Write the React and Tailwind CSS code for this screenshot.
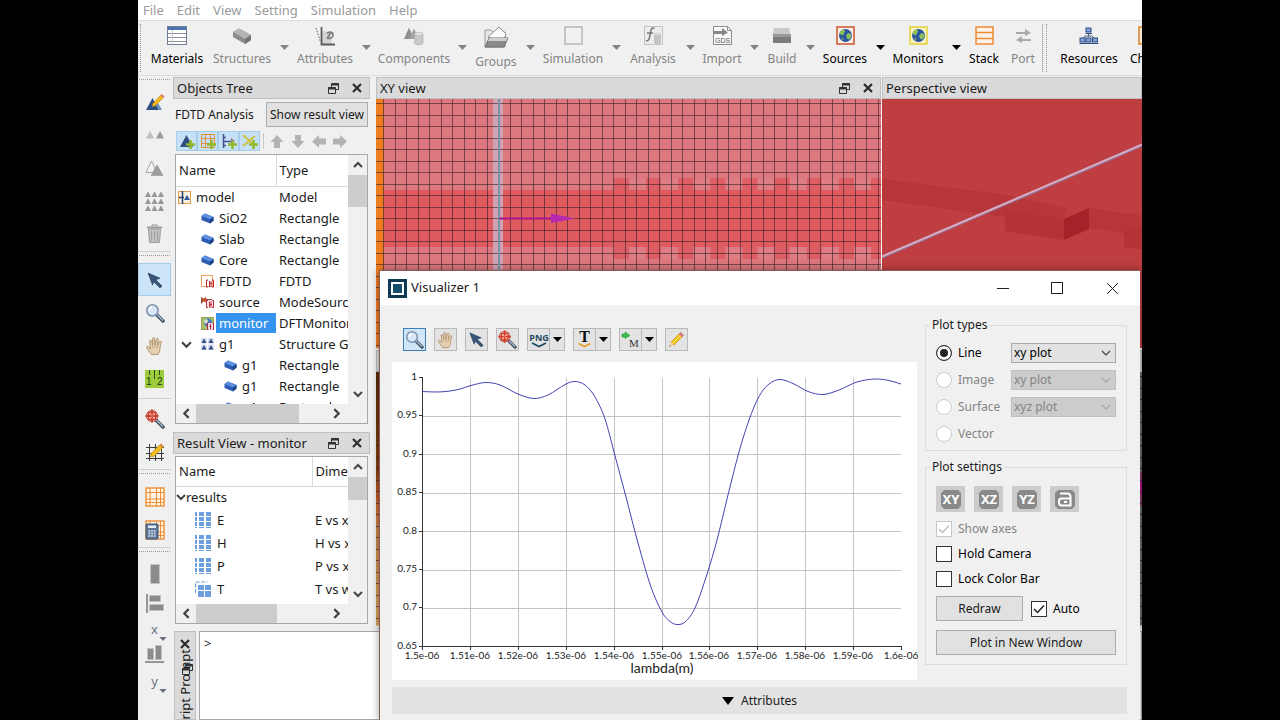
/**
 * Photonic simulation workspace — objects tree, layout views, script prompt
 * and the floating Visualizer window with a transmission plot.
 */
import { useState } from 'react'

const MENUS = ['File', 'Edit', 'View', 'Setting', 'Simulation', 'Help']

/* ---------- small shared glyphs ---------- */

function Caret({ className = '' }) {
  return (
    <svg className={className} width="9" height="5" viewBox="0 0 9 5">
      <path d="M0 0h9L4.5 5z" fill="currentColor" />
    </svg>
  )
}

function FloatIcon() {
  return (
    <svg width="11" height="11" viewBox="0 0 11 11" fill="none" stroke="#333">
      <path d="M3.5 4V.5h7v6H8" />
      <path d="M3 1.5h8" strokeWidth="2" />
      <path d="M.5 4.5h7v6h-7z" fill="#ddd" />
      <path d="M0 5.5h8" strokeWidth="2" />
    </svg>
  )
}

function CloseIcon() {
  return (
    <svg width="10" height="10" viewBox="0 0 10 10" stroke="#2b2b2b" strokeWidth="2.2">
      <path d="M1 1l8 8M9 1L1 9" />
    </svg>
  )
}

function Chevron({ d, size = 10, color = '#444', width = 2 }) {
  return (
    <svg width={size} height={size} viewBox="0 0 10 10" fill="none" stroke={color} strokeWidth={width}>
      <path d={d} />
    </svg>
  )
}

const UP = 'M1 7l4-4 4 4'
const DOWN = 'M1 3l4 4 4-4'
const LEFT = 'M7 1L3 5l4 4'
const RIGHT = 'M3 1l4 4-4 4'

/* ---------- pictures ---------- */

function Magnifier({ size = 20, target = false }) {
  return (
    <svg width={size} height={size} viewBox="0 0 20 20">
      <path d="M11 11l7 7" stroke="#3d4a5c" strokeWidth="3.4" strokeLinecap="round" />
      <path d="M12 11.6l5.6 5.6" stroke="#aab8cc" strokeWidth="1.4" strokeLinecap="round" />
      {target ? (
        <>
          <circle cx="7" cy="7" r="5.6" fill="#f3d9d3" stroke="#b9564a" />
          <path d="M7 .5v13M.5 7h13" stroke="#cf3a26" strokeWidth="1.8" />
          <path d="M3.5 3.5h7v7h-7z" fill="none" stroke="#cf3a26" strokeWidth="1.4" />
          <path d="M5 5h4v4H5z" fill="#e2553f" />
          <path d="M5.500 5.500h.8v.8h-.8zM8 5.500h.8v.8H8zM5.500 8h.8v.8h-.8zM8 8h.8v.8H8z" fill="#fff" />
        </>
      ) : (
        <>
          <circle cx="7.4" cy="7.4" r="5.6" fill="#d8e7f8" stroke="#7f93b0" strokeWidth="1.6" />
          <path d="M4.2 7.2a3.4 3.4 0 013-3.2" stroke="#fff" strokeWidth="1.6" fill="none" />
        </>
      )}
    </svg>
  )
}

function Hand({ size = 20 }) {
  return (
    <svg width={size} height={size} viewBox="0 0 20 20">
      <path
        d="M6.5 18.5c-1.5-2-4-5.2-4.8-6.8-.6-1.3 1-1.9 1.9-.9L5.5 13 4.6 5.3c-.1-1.5 1.7-1.6 2-.2L7.5 9l.1-6.3c0-1.5 2-1.5 2.1 0L10 9l1.3-5.700c.4-1.4 2.2-1 2 .4L12.6 9.500l1.900-3.700c.7-1.3 2.3-.5 1.800.9-1 3-1.2 4.500-1.500 7-.2 2-1 3.300-1.800 4.800z"
        fill="#e6d0b0"
        stroke="#a98f6c"
        strokeWidth=".9"
      />
      <path d="M7.5 9l.4 3M10 9v3M12.600 9.500l-.5 2.800" stroke="#b89d78" strokeWidth=".8" />
    </svg>
  )
}

function Pointer({ size = 18 }) {
  return (
    <svg width={size} height={size} viewBox="0 0 18 18">
      <path d="M2 2l12 5.200-4.200 1.600L16 15l-2 2-6.200-6.200L6.500 14z" fill="#3a5478" stroke="#22395a" strokeWidth=".6" />
    </svg>
  )
}

function Pencil({ size = 18 }) {
  return (
    <svg width={size} height={size} viewBox="0 0 18 18">
      <path d="M3 12L12 3l3 3-9 9z" fill="#f4c51b" stroke="#b98a10" strokeWidth=".7" />
      <path d="M4.500 13.500l9-9" stroke="#fbe67a" strokeWidth="1" />
      <path d="M12 3l1.500-1.500 3 3L15 6z" fill="#d9788c" stroke="#a9586a" strokeWidth=".6" />
      <path d="M3 12l-1.500 4.500L6 15z" fill="#ead2a2" />
      <path d="M2 15l-.6 1.600L3 16z" fill="#222" />
    </svg>
  )
}

function EditStructure() {
  return (
    <svg width="20" height="20" viewBox="0 0 20 20">
      <path d="M1 18L7.500 6 14 18z" fill="#2d4f82" />
      <path d="M14 18l-4-7.500 3 .5 4 7z" fill="#6d8fc0" />
      <path d="M8 11.500L16 3l2.500 2.500-8.300 8.300-3 .8z" fill="#f5bd1c" stroke="#b07f10" strokeWidth=".6" />
      <path d="M15.500 3.500L17 2l2.500 2.500L18 6z" fill="#e07a62" />
    </svg>
  )
}

function Triangles({ kind }) {
  if (kind === 'pair') {
    return (
      <svg width="18" height="9" viewBox="0 0 18 9">
        <path d="M0 8.500L4 1l4 7.500z" fill="#bdbdbd" />
        <path d="M10 8.500L14 1l4 7.500z" fill="#9b9b9b" />
      </svg>
    )
  }
  if (kind === 'copy') {
    return (
      <svg width="19" height="18" viewBox="0 0 19 18">
        <path d="M1 13.500L6.500 2l5.500 11.500z" fill="#f4f4f4" stroke="#a5a5a5" />
        <path d="M6 16.500L12 6l6 10.500z" fill="#9d9d9d" stroke="#8a8a8a" strokeWidth=".5" />
      </svg>
    )
  }
  return (
    <svg width="19" height="20" viewBox="0 0 19 20">
      {[0, 7, 14].map((y) =>
        [0, 6.5, 13].map((x) => (
          <path key={`${x}-${y}`} d={`M${x} ${y + 6}l3-5.8 3 5.8z`} fill="#979797" />
        )),
      )}
    </svg>
  )
}

function Trash() {
  return (
    <svg width="17" height="19" viewBox="0 0 17 19">
      <path d="M2.500 5h12l-1 13.500h-10z" fill="#c4c4c4" stroke="#9a9a9a" />
      <path d="M5.500 7v10M8.500 7v10M11.500 7v10" stroke="#a3a3a3" strokeWidth="1.100" />
      <path d="M1 3.500h15" stroke="#9b9b9b" strokeWidth="2" />
      <path d="M6 2.500V1h5v1.500" fill="none" stroke="#8f8f8f" />
    </svg>
  )
}

function Ruler() {
  return (
    <svg width="19" height="18" viewBox="0 0 19 18">
      <rect width="19" height="18" fill="#9ccb3c" />
      <path d="M4.500 0v5M9.500 0v9M14.500 0v5" stroke="#33471a" />
      <text x="1" y="15" fontSize="10" fontFamily="Liberation Sans, sans-serif" fill="#22330c">1</text>
      <text x="12" y="15" fontSize="10" fontFamily="Liberation Sans, sans-serif" fill="#22330c">2</text>
    </svg>
  )
}

function MeshPencil() {
  return (
    <svg width="20" height="20" viewBox="0 0 20 20">
      <path d="M4.500 2v17M10.500 2v17M16.500 2v17M1 5.500h18M1 11.500h18M1 16.500h18" stroke="#3a3a3a" />
      <path d="M6 11.500L14.500 3l3 3L9 14.300l-3.500.7z" fill="#f5bf1c" stroke="#a97a10" strokeWidth=".6" />
      <path d="M14.500 3L16 1.500l3 3L17.500 6z" fill="#e08a3c" />
    </svg>
  )
}

function OrangeGrid({ calc = false }) {
  return (
    <svg width="20" height="20" viewBox="0 0 20 20">
      <rect x="1" y="1" width="18" height="18" fill="#fff3e4" stroke="#ec8f35" strokeWidth="1.400" />
      <path d="M5 1v18M11.500 1v18M15.500 1v18M1 5.500h18M1 12h18M1 15.500h18" stroke="#ec8f35" />
      {calc && (
        <>
          <rect x="1" y="4" width="12" height="15" rx="1" fill="#5d789b" stroke="#3c5472" />
          <rect x="3" y="5.500" width="8" height="2.500" fill="#e8eef5" />
          <path d="M3.500 11h7M3.500 13.500h7M3.500 16h7" stroke="#e8eef5" strokeWidth="1.600" strokeDasharray="1.700 1" />
        </>
      )}
    </svg>
  )
}

function AlignIcon({ kind }) {
  if (kind === 'tall') {
    return (
      <svg width="10" height="20" viewBox="0 0 10 20">
        <rect x=".5" y=".5" width="9" height="19" fill="#8b8b8b" stroke="#c4c4c4" />
      </svg>
    )
  }
  if (kind === 'left') {
    return (
      <svg width="18" height="19" viewBox="0 0 18 19">
        <path d="M1 0v19" stroke="#777" strokeWidth="1.500" />
        <rect x="3.500" y="1.500" width="11" height="6" fill="#8b8b8b" stroke="#c0c0c0" />
        <rect x="3.500" y="10.500" width="14" height="6" fill="#8b8b8b" stroke="#c0c0c0" />
      </svg>
    )
  }
  return (
    <svg width="19" height="18" viewBox="0 0 19 18">
      <path d="M0 17h19" stroke="#777" strokeWidth="1.500" />
      <rect x="2.500" y="3.500" width="6" height="11" fill="#8b8b8b" stroke="#c0c0c0" />
      <rect x="10.500" y=".5" width="6" height="14" fill="#8b8b8b" stroke="#c0c0c0" />
    </svg>
  )
}

function AxisLetter({ label }) {
  return (
    <span className="relative w-4 text-center leading-4 text-gray-500">
      {label}
      <Caret className="absolute -right-1 -bottom-1 h-1 w-2 text-gray-500" />
    </span>
  )
}

/* ---------- main toolbar ---------- */

function ToolIcon({ name }) {
  switch (name) {
    case 'Materials':
      return (
        <svg width="20" height="20" viewBox="0 0 20 20">
          <rect x=".5" y=".5" width="19" height="18" fill="#fff" stroke="#6f7d92" />
          <rect x="1" y="1" width="18" height="3" fill="#4a72b4" />
          <path d="M1 7.500h18M1 11.500h18M1 15.500h18" stroke="#8a8f98" />
          <path d="M5.500 4v14.500" stroke="#c5c9d0" />
        </svg>
      )
    case 'Structures':
      return (
        <svg width="20" height="18" viewBox="0 0 20 18">
          <path d="M1 5l6-3.500L19 8v5l-6 4L1 10z" fill="#8c8c8c" />
          <path d="M1 5l6-3.500L19 8l-6 4z" fill="#b4b4b4" />
          <path d="M13 12l6-4v5l-6 4z" fill="#737373" />
        </svg>
      )
    case 'Attributes':
      return (
        <svg width="20" height="20" viewBox="0 0 20 20">
          <path d="M7 18L7 5c6-1 10 4 10 13z" fill="#d4d4d4" />
          <path d="M6.500 1v17.500H20" fill="none" stroke="#5c5c5c" strokeWidth="1.800" />
          <path d="M1 2l4.500 14" stroke="#555" strokeDasharray="1.500 1.500" />
          <path d="M12 7.500c2-2.500 6-1.500 6 1.500s-4 4.500-6 2.500M12 12.500l4-6" fill="none" stroke="#808080" strokeWidth="1.800" />
        </svg>
      )
    case 'Components':
      return (
        <svg width="20" height="20" viewBox="0 0 20 20">
          <path d="M0 13L5 1.500 10 13z" fill="#8f8f8f" />
          <path d="M5 13l5-10.500L15 13z" fill="#a2a2a2" />
          <path d="M10.500 8v9c0 2.500 8.500 2.500 8.500 0V8z" fill="#c9c9c9" stroke="#aaa" strokeWidth=".6" />
          <ellipse cx="14.700" cy="8" rx="4.300" ry="1.800" fill="#e2e2e2" stroke="#aaa" strokeWidth=".6" />
        </svg>
      )
    case 'Groups':
      return (
        <svg width="26" height="24" viewBox="0 0 26 24">
          <path d="M2 22V5h6l2 2h12v15z" fill="#e7e7e7" stroke="#9a9a9a" />
          <path d="M5 12l11-10 7 7-3 9z" fill="#fbfbfb" stroke="#8d8d8d" />
          <path d="M2 22l4-9h19l-4 9z" fill="#8a8a8a" stroke="#6e6e6e" />
          <path d="M5 16l1.300-3h18.500l-1.300 3z" fill="#cdcdcd" />
        </svg>
      )
    case 'Simulation':
      return (
        <svg width="19" height="19" viewBox="0 0 19 19">
          <rect x="1" y="1" width="17" height="17" fill="#f1f1f1" stroke="#b7b7b7" strokeWidth="1.500" />
        </svg>
      )
    case 'Analysis':
      return (
        <svg width="19" height="19" viewBox="0 0 19 19">
          <rect x=".5" y=".5" width="18" height="18" fill="#ededed" stroke="#c3c3c3" />
          <path d="M10.500 2.500c-3-1.500-3.500 1-4.200 5S5 16 2 14.500M3 7h6" fill="none" stroke="#777" strokeWidth="1.500" />
          <path d="M10 7.500v9.500c0 1.500 7 1.500 7 0V7.500z" fill="#c4c4c4" />
          <ellipse cx="13.500" cy="7.500" rx="3.500" ry="1.400" fill="#dedede" />
        </svg>
      )
    case 'Import':
      return (
        <svg width="19" height="19" viewBox="0 0 19 19">
          <path d="M.5.5h14l4 4v14H.5z" fill="#f8f8f8" stroke="#8b8b8b" />
          <path d="M14.5.5v4h4" fill="none" stroke="#8b8b8b" />
          <path d="M1 5h8V2l6 4.500L9 10V8H1z" fill="#888" />
          <text x="2" y="17" fontSize="7" fontFamily="Liberation Sans, sans-serif" fill="#555">GDS</text>
        </svg>
      )
    case 'Build':
      return (
        <svg width="20" height="16" viewBox="0 0 20 16">
          <path d="M2 0h15l1.500 7h-18z" fill="#c9c9c9" />
          <path d="M1 6h18v9H1z" fill="#7c7c7c" />
          <path d="M1 6h18v3H1z" fill="#999" />
        </svg>
      )
    case 'Sources':
    case 'Monitors':
      return (
        <svg width="19" height="19" viewBox="0 0 19 19">
          <rect
            x="1"
            y="1"
            width="17"
            height="17"
            fill={name === 'Sources' ? '#fbeee8' : '#f7f3c0'}
            stroke={name === 'Sources' ? '#d0603a' : '#e3d243'}
            strokeWidth="1.600"
          />
          <circle cx="9.500" cy="9.500" r="6.500" fill="#2a55a0" />
          <path d="M4 6c2-3 5-2.500 5-1s-1.500 2-1.500 3.500S5 9 4 8z" fill="#8dc05c" />
          <path d="M11 8c2-1.500 4.500-.5 4.500 1.500S13 14.500 11.500 13 10 9.500 11 8z" fill="#8dc05c" />
          <path d="M5 11.500l2.500 1-.5 2z" fill="#8dc05c" />
        </svg>
      )
    case 'Stack':
      return (
        <svg width="19" height="19" viewBox="0 0 19 19" fill="#fdf3e8" stroke="#ee8a34" strokeWidth="1.500">
          <rect x="1" y="1" width="17" height="17" />
          <path d="M1 6.500h17M1 12.500h17" />
        </svg>
      )
    case 'Port':
      return (
        <svg width="18" height="18" viewBox="0 0 18 18" fill="#a9a9a9">
          <path d="M2 5h9V2l6 4-6 3V7H2zM17 12H8V9l-6 4 6 3v-2h9z" />
        </svg>
      )
    case 'Resources':
      return (
        <svg width="20" height="18" viewBox="0 0 20 18">
          <path d="M9.500 6v4M3 13l3-4h7l4 4" fill="none" stroke="#56657c" />
          {[[6.5, 1], [0.5, 11], [6.5, 11], [13, 11]].map(([x, y]) => (
            <g key={`${x}-${y}`}>
              <rect x={x + 0.5} y={y} width="5" height="4" fill="#7fa4df" stroke="#2f4a80" />
              <path d={`M${x} ${y + 5.5}h6.5`} stroke="#2f4a80" />
            </g>
          ))}
        </svg>
      )
    default:
      return (
        <svg width="19" height="19" viewBox="0 0 19 19">
          <rect x="1" y="1" width="17" height="17" fill="#f6e6d2" stroke="#d9832f" strokeWidth="1.500" />
          <path d="M4.500 3v13" stroke="#555" strokeDasharray="2 1" />
        </svg>
      )
  }
}

// muted tools are greyed out until the project is back in layout mode
const TOOLS = [
  { name: 'Materials', w: 'w-[56px]' },
  { name: 'Structures', w: 'w-[74px]', muted: true, menu: true },
  { name: 'Attributes', w: 'w-[72px]', muted: true, menu: true },
  { name: 'Components', w: 'w-[86px]', muted: true, menu: true },
  { name: 'Groups', w: 'w-[58px]', muted: true, menu: true },
  { name: 'Simulation', w: 'w-[76px]', muted: true, menu: true },
  { name: 'Analysis', w: 'w-[64px]', muted: true, menu: true },
  { name: 'Import', w: 'w-[54px]', muted: true, menu: true },
  { name: 'Build', w: 'w-[46px]', muted: true, menu: true },
  { name: 'Sources', w: 'w-[60px]', menu: true },
  { name: 'Monitors', w: 'w-[66px]', menu: true },
  { name: 'Stack', w: 'w-[46px]' },
  { name: 'Port', w: 'w-[32px]', muted: true },
]

function Tool({ name, w, muted, menu }) {
  const tone = muted ? 'text-[#848484]' : 'text-black'
  return (
    <div className={`flex shrink-0 items-start ${tone}`}>
      <button type="button" className={`flex flex-col items-center gap-1 ${w}`}>
        <span className={`flex items-center justify-center ${name === 'Groups' ? 'h-[26px]' : 'h-[23px]'}`}>
          <ToolIcon name={name} />
        </span>
        <span className="leading-4">{name}</span>
      </button>
      {menu && (
        <button type="button" aria-label={`${name} menu`} className="flex h-[46px] w-[10px] items-center justify-center">
          <Caret className="shrink-0" />
        </button>
      )}
    </div>
  )
}

function MainToolbar() {
  return (
    <div className="flex h-[56px] shrink-0 items-start overflow-hidden border-y border-y-[#dcdcdc] bg-[#f0f0f0] pt-[3px] text-xs">
      <div className="ml-[2px] mr-[8px] h-12 w-px shrink-0 border-l border-dotted border-[#999]" />
      {TOOLS.map((tool) => (
        <Tool key={tool.name} {...tool} />
      ))}
      <div className="ml-[3px] mr-[7px] flex h-12 shrink-0 gap-[3px]">
        <div className="w-px bg-[#b8b8b8]" />
        <div className="border-l border-dotted border-[#999]" />
      </div>
      <Tool name="Resources" w="w-[70px]" />
      <Tool name="Check" w="w-[46px]" />
    </div>
  )
}

/* ---------- left tool strip ---------- */

function StripDivider() {
  return (
    <div className="flex h-[13px] shrink-0 flex-col gap-[3px] pt-px">
      <div className="h-px bg-[#cfcfcf]" />
      <div className="mx-px border-t border-dotted border-[#9a9a9a]" />
    </div>
  )
}

function StripButton({ label, active, h = 'h-[33px]', children }) {
  return (
    <button
      type="button"
      aria-label={label}
      className={`flex shrink-0 items-center justify-center ${h} ${active ? 'border border-[#a5cdea] bg-[#cce4f7]' : ''}`}
    >
      {children}
    </button>
  )
}

function LeftStrip() {
  return (
    <div className="flex w-[33px] shrink-0 flex-col overflow-hidden bg-[#f0f0f0]">
      <div className="mx-px mb-[5px] mt-[3px] border-t border-dotted border-[#9a9a9a]" />
      <StripButton label="Edit object"><EditStructure /></StripButton>
      <StripButton label="Duplicate"><Triangles kind="pair" /></StripButton>
      <StripButton label="Copy"><Triangles kind="copy" /></StripButton>
      <StripButton label="Array"><Triangles kind="array" /></StripButton>
      <StripButton label="Delete"><Trash /></StripButton>
      <StripDivider />
      <StripButton label="Select" active><Pointer /></StripButton>
      <StripButton label="Zoom"><Magnifier /></StripButton>
      <StripButton label="Pan"><Hand /></StripButton>
      <StripButton label="Measure"><Ruler /></StripButton>
      <div className="my-[3px] h-px bg-[#cfcfcf]" />
      <StripButton label="Zoom extent"><Magnifier target /></StripButton>
      <StripButton label="Edit grid"><MeshPencil /></StripButton>
      <StripDivider />
      <StripButton label="Show mesh" h="h-[32px]"><OrangeGrid /></StripButton>
      <StripButton label="Compute mesh"><OrangeGrid calc /></StripButton>
      <StripDivider />
      <StripButton label="Center" h="h-[30px]"><AlignIcon kind="tall" /></StripButton>
      <StripButton label="Align left" h="h-[29px]"><AlignIcon kind="left" /></StripButton>
      <StripButton label="Align x" h="h-[22px]"><AxisLetter label="x" /></StripButton>
      <StripButton label="Align bottom" h="h-[28px]"><AlignIcon kind="bottom" /></StripButton>
      <StripButton label="Align y" h="h-[25px]"><AxisLetter label="y" /></StripButton>
    </div>
  )
}

/* ---------- dock panels ---------- */

function DockHeader({ title, buttons = true }) {
  return (
    <div className="flex h-[22px] shrink-0 items-center border border-[#c0c0c0] bg-[#dadada] pl-[3px] pr-[7px]">
      <h2 className="flex-1 truncate">{title}</h2>
      {buttons && (
        <div className="flex items-center gap-[13px]">
          <button type="button" aria-label={`Float ${title}`}><FloatIcon /></button>
          <button type="button" aria-label={`Close ${title}`}><CloseIcon /></button>
        </div>
      )}
    </div>
  )
}

function TreeIcon({ kind }) {
  switch (kind) {
    case 'model':
      return (
        <svg width="13" height="13" viewBox="0 0 13 13">
          <rect x=".5" y=".5" width="12" height="12" fill="#fdf1e2" stroke="#e39a4c" />
          <path d="M4.500 0v13M1 6.500h5" stroke="#25406e" strokeWidth="1.500" />
          <path d="M6 9l3-5 3 5z" fill="#2d57a0" />
        </svg>
      )
    case 'cube':
      return (
        <svg width="13" height="11" viewBox="0 0 13 11">
          <path d="M.5 3L4 .5 12.500 4v3.500L9 10.500.5 7z" fill="#2c5bb4" />
          <path d="M.5 3L4 .5 12.500 4 9 6.500z" fill="#5f90e0" />
          <path d="M9 6.500L12.500 4v3.500L9 10.500z" fill="#1c3f86" />
        </svg>
      )
    case 'fdtd':
      return (
        <svg width="13" height="13" viewBox="0 0 13 13">
          <rect x=".5" y=".5" width="11" height="11" fill="#fff" stroke="#eba25c" />
          <path d="M7 5H5.500v7H7M11 5h1.500v7H11M8.500 6v6M10 6v6M8 8.500h3" fill="none" stroke="#c02a3c" />
        </svg>
      )
    case 'source':
      return (
        <svg width="13" height="12" viewBox="0 0 13 12">
          <path d="M0 1l3 2h8v2H3L0 8z" fill="#7a5230" />
          <path d="M0 4l5-3 1 6z" fill="#c8502c" />
          <rect x="5" y="4" width="8" height="8" fill="#fbe3e3" />
          <path d="M7 4.500H5.500v7H7M11 4.500h1.500v7H11M8.500 5.500v6M10 5.500v6M8 8.500h3" fill="none" stroke="#c02a3c" />
        </svg>
      )
    case 'monitor':
      return (
        <svg width="13" height="13" viewBox="0 0 13 13">
          <rect x=".5" y=".5" width="12" height="12" fill="#a9bf6a" stroke="#9aa34f" />
          <circle cx="7" cy="5.500" r="4" fill="#4a78bc" />
          <path d="M3 3l3-1 1 3-3 2z" fill="#dfe9c8" />
          <rect x="6" y="6" width="7" height="7" fill="#f4dfe4" />
          <path d="M7.500 6H6.500v6.500h1M11.500 6h1v6.500h-1M9.500 7v5.500M8.500 9.500h2" fill="none" stroke="#b0284a" />
        </svg>
      )
    case 'group':
      return (
        <svg width="13" height="12" viewBox="0 0 13 12">
          <path d="M0 0h6v5.500H0zM7 0h6v5.500H7zM0 6.500h6V12H0zM7 6.500h6V12H7z" fill="#d7e0ee" />
          <path d="M.5 5l2.500-4.500L5.500 5zM7.500 5L10 .5 12.500 5zM.5 11.500L3 7l2.500 4.500zM7.500 11.500L10 7l2.500 4.500z" fill="#33507f" />
        </svg>
      )
    case 'matrix':
      return (
        <svg width="16" height="16" viewBox="0 0 16 16" fill="#6d9fdf">
          {[0, 5, 10].map((y) => (
            <path key={y} d={`M0 ${y}h2v4H0zM4 ${y}h5v4H4zM11 ${y}h5v4h-5z`} />
          ))}
          <path d="M0 15h2v1H0zM4 15h5v1H4zM11 15h5v1h-5z" />
        </svg>
      )
    default:
      return (
        <svg width="16" height="16" viewBox="0 0 16 16">
          <path d="M.5 12V1h12" fill="none" stroke="#6d9fdf" strokeDasharray="4 1.500" strokeWidth="1.200" />
          <path d="M3 4h6v5H3zM10 4h6v5h-6zM3 10h6v6H3zM10 10h6v6h-6z" fill="#6d9fdf" />
        </svg>
      )
  }
}

const OBJECTS = [
  { name: 'model', type: 'Model', icon: 'model', pad: 'pl-[2px]' },
  { name: 'SiO2', type: 'Rectangle', icon: 'cube', pad: 'pl-[25px]' },
  { name: 'Slab', type: 'Rectangle', icon: 'cube', pad: 'pl-[25px]' },
  { name: 'Core', type: 'Rectangle', icon: 'cube', pad: 'pl-[25px]' },
  { name: 'FDTD', type: 'FDTD', icon: 'fdtd', pad: 'pl-[25px]' },
  { name: 'source', type: 'ModeSource', icon: 'source', pad: 'pl-[25px]' },
  { name: 'monitor', type: 'DFTMonitor', icon: 'monitor', pad: 'pl-[25px]' },
  { name: 'g1', type: 'Structure Group', icon: 'group', pad: 'pl-[5px]', open: true },
  { name: 'g1', type: 'Rectangle', icon: 'cube', pad: 'pl-[48px]' },
  { name: 'g1', type: 'Rectangle', icon: 'cube', pad: 'pl-[48px]' },
  { name: 'g1', type: 'Rectangle', icon: 'cube', pad: 'pl-[48px]' },
]

const RESULTS = [
  { name: 'E', dim: 'E vs x', icon: 'matrix' },
  { name: 'H', dim: 'H vs x', icon: 'matrix' },
  { name: 'P', dim: 'P vs x', icon: 'matrix' },
  { name: 'T', dim: 'T vs wavelength', icon: 'vector' },
  { name: 'x', dim: 'x', icon: 'vector' },
]

// table body plus the always-visible scroll bars around it
function ScrollBox({ thumbY, thumbX, className, children }) {
  return (
    <div className={`mx-[2px] flex flex-col overflow-hidden border border-[#a3a8ad] bg-[#f0f0f0] ${className}`}>
      <div className="flex min-h-0 flex-1">
        <div className="min-w-0 flex-1 overflow-hidden bg-white">{children}</div>
        <div className="flex w-[19px] shrink-0 flex-col items-center">
          <span className="flex h-[20px] items-center"><Chevron d={UP} /></span>
          <span className={`w-full bg-[#cdcdcd] ${thumbY}`} />
          <span className="flex-1" />
          <span className="flex h-[20px] items-center"><Chevron d={DOWN} /></span>
        </div>
      </div>
      <div className="flex h-[19px] shrink-0 items-center">
        <span className="flex w-[20px] justify-center"><Chevron d={LEFT} size={11} /></span>
        <span className={`h-full bg-[#cdcdcd] ${thumbX}`} />
        <span className="flex-1" />
        <span className="mr-[20px] flex w-[22px] justify-center"><Chevron d={RIGHT} size={11} /></span>
      </div>
    </div>
  )
}

function TreeToggle({ label, children }) {
  return (
    <button type="button" aria-label={label} className="flex h-5 w-[21px] items-center justify-center border border-[#a5cdea] bg-[#c6e0f5]">
      {children}
    </button>
  )
}

function Plus() {
  return <path d="M11.500 7v9M7 11.500h9" stroke="#93b82c" strokeWidth="2.600" />
}

const ARROWS = [
  { label: 'Move up', d: 'M7 0l6.500 7H10v6H4V7H.5z' },
  { label: 'Move down', d: 'M7 13l6.500-7H10V0H4v6H.5z' },
  { label: 'Move out', d: 'M0 6.500L7 0v3.500h7v6H7V13z' },
  { label: 'Move in', d: 'M14 6.500L7 0v3.500H0v6h7V13z' },
]

function ObjectsTree() {
  return (
    <section className="flex flex-col">
      <DockHeader title="Objects Tree" />
      <div className="mt-[3px] flex items-center justify-between px-[2px] text-xs">
        <span>FDTD Analysis</span>
        <button type="button" className="h-[25px] w-[102px] whitespace-nowrap border border-[#adadad] bg-[#e1e1e1]">
          Show result view
        </button>
      </div>
      <div className="mt-1 flex items-center pl-[3px]">
        <TreeToggle label="Add structure">
          <svg width="16" height="16" viewBox="0 0 16 16"><path d="M1 14L7.500 2 14 14z" fill="#2d4f82" /><Plus /></svg>
        </TreeToggle>
        <TreeToggle label="Add region">
          <svg width="16" height="16" viewBox="0 0 16 16">
            <path d="M1.500 1.500h13v13h-13zM5.500 1v13M10.500 1v13M1 5.500h13M1 10.500h13" fill="none" stroke="#e0903f" />
            <Plus />
          </svg>
        </TreeToggle>
        <TreeToggle label="Add source">
          <svg width="16" height="16" viewBox="0 0 16 16">
            <path d="M2.500 1v14M3 8.500h10M3 4.500h2M3 12.500h2" stroke="#4a4f90" strokeWidth="1.500" />
            <path d="M10 5l4 3-4 3z" fill="#a04cb8" />
            <Plus />
          </svg>
        </TreeToggle>
        <TreeToggle label="Add monitor">
          <svg width="16" height="16" viewBox="0 0 16 16">
            <path d="M1 2l12 11M1 13L13 3" stroke="#cfc239" strokeWidth="1.800" />
            <Plus />
          </svg>
        </TreeToggle>
        <span className="ml-[3px] mr-[6px] h-4 w-px bg-[#c8c8c8]" />
        <div className="flex gap-[7px]">
          {ARROWS.map((a) => (
            <button key={a.label} type="button" aria-label={a.label}>
              <svg width="14" height="13" viewBox="0 0 14 13"><path d={a.d} fill="#b3b3b3" /></svg>
            </button>
          ))}
        </div>
      </div>
      <ScrollBox className="mt-[3px] h-[270px]" thumbY="h-8" thumbX="w-[103px]">
        <table className="w-[240px] table-fixed border-collapse">
          <thead>
            <tr className="h-[31px]">
              <th className="w-[100px] border-b border-r border-[#d8d8d8] pl-[3px] text-left font-normal">Name</th>
              <th className="border-b border-[#d8d8d8] pl-[3px] text-left font-normal">Type</th>
            </tr>
          </thead>
          <tbody>
            {OBJECTS.map((o, i) => {
              const selected = o.name === 'monitor'
              return (
                <tr key={i} className="h-[21px] leading-[21px]">
                  <td className="p-0">
                    <div className={`flex h-[21px] items-center ${o.pad}`}>
                      {o.open && <span className="mr-[9px] flex w-[11px]"><Chevron d={DOWN} size={11} /></span>}
                      <span className="flex w-[15px] shrink-0"><TreeIcon kind={o.icon} /></span>
                      <span className={`flex-1 pl-[3px] ${selected ? 'h-5 bg-[#3393ef] leading-5 text-white' : ''}`}>
                        {o.name}
                      </span>
                    </div>
                  </td>
                  <td className="whitespace-nowrap p-0 pl-[3px]">{o.type}</td>
                </tr>
              )
            })}
          </tbody>
        </table>
      </ScrollBox>
    </section>
  )
}

function ResultView() {
  return (
    <section className="mt-[8px] flex flex-col">
      <DockHeader title="Result View - monitor" />
      <ScrollBox className="mt-[2px] h-[168px]" thumbY="h-[23px]" thumbX="w-[81px]">
        <table className="w-[260px] table-fixed border-collapse">
          <thead>
            <tr className="h-[29px]">
              <th className="w-[136px] border-b border-r border-[#d8d8d8] pl-[3px] text-left font-normal">Name</th>
              <th className="border-b border-[#d8d8d8] pl-[3px] text-left font-normal">Dimension</th>
            </tr>
          </thead>
          <tbody>
            <tr className="h-[22px]">
              <td className="p-0">
                <div className="flex items-center">
                  <Chevron d={DOWN} />
                  <span>results</span>
                </div>
              </td>
              <td />
            </tr>
            {RESULTS.map((r) => (
              <tr key={r.name} className="h-[23px]">
                <td className="p-0">
                  <div className="flex items-center pl-[19px]">
                    <TreeIcon kind={r.icon} />
                    <span className="pl-[6px]">{r.name}</span>
                  </div>
                </td>
                <td className="whitespace-nowrap p-0 pl-[3px]">{r.dim}</td>
              </tr>
            ))}
          </tbody>
        </table>
      </ScrollBox>
    </section>
  )
}

/* ---------- layout views ---------- */

const range = (n) => Array.from({ length: n }, (_, i) => i)

function GridLines({ x0, y0, color }) {
  return (
    <g stroke={color} shapeRendering="crispEdges">
      {range(120).map((i) => {
        const x = Math.round(x0 + i * 11.51) + 0.5
        return <path key={`v${i}`} d={`M${x} 0V800`} />
      })}
      {range(60).map((i) => {
        const y = Math.round(y0 + i * 11.51) + 0.5
        return <path key={`h${i}`} d={`M0 ${y}H1400`} />
      })}
    </g>
  )
}

function XYCanvas() {
  return (
    <svg className="block h-full w-full">
      <rect width="100%" height="100%" fill="#dc787e" />
      <rect y="91" width="100%" height="57" fill="#e05b60" />
      <rect x="238" y="79" width="100%" height="12" fill="#de7d83" />
      <rect x="238" y="148" width="100%" height="12" fill="#de7d83" />
      {range(24).map((i) => (
        <g key={i} fill="#dc5d63">
          <rect x={238 + i * 32.13} y="79" width="15" height="12" />
          <rect x={238 + i * 32.13} y="148" width="15" height="12" />
        </g>
      ))}
      <rect width="8" height="100%" fill="#f07c22" />
      <rect x="117" width="10" height="100%" fill="#cfa3b4" />
      <GridLines x0={7} y0={4} color="rgba(60,36,40,0.62)" />
      <rect x="122" width="2" height="100%" fill="#7894a4" />
      <path d="M123 119.500h54" stroke="#a3148e" strokeWidth="2" />
      <path d="M175 114.500l24 5-24 4.500z" fill="#b62ab0" />
    </svg>
  )
}

function PerspectiveCanvas() {
  return (
    <svg className="block h-full w-full">
      <rect width="100%" height="100%" fill="#bf3e41" />
      <path d="M0 80L126 96 185 109 182 120 123 118 0 101z" fill="#b73639" />
      <path d="M207 109l120 17v22l-120-19z" fill="#b73639" />
      <path d="M123 112l59 8v21l-59-9z" fill="#b43337" />
      <path d="M182 120l25-11v21l-25 11z" fill="#a52328" />
      <path d="M242 129l60 6v22l-60-9z" fill="#b43337" />
      <path d="M0 158L260 46 490-53" stroke="#8c7fb0" strokeWidth="3" fill="none" />
      <path d="M0 157.500L260 45.500 490-53.500" stroke="#e6a9b8" strokeWidth="1.800" fill="none" />
    </svg>
  )
}

function SideCanvas() {
  return (
    <svg className="block h-full w-full">
      <defs>
        <linearGradient id="oxide" x1="0" y1="0" x2="0" y2="1">
          <stop offset="0" stopColor="#5b2a06" />
          <stop offset="0.38" stopColor="#84400f" />
          <stop offset="0.5" stopColor="#c65f28" />
          <stop offset="0.62" stopColor="#c98746" />
          <stop offset="1" stopColor="#d9a35c" />
        </linearGradient>
      </defs>
      <rect width="100%" height="100%" fill="url(#oxide)" />
      <GridLines x0={7} y0={4} color="rgba(60,36,40,0.62)" />
    </svg>
  )
}

function YZCanvas() {
  return (
    <svg className="block h-full w-full">
      <rect width="100%" height="100%" fill="#6c6f76" />
      <rect y="100" width="100%" height="34" fill="#8d3a68" />
      <rect y="108" width="100%" height="14" fill="#b5158f" />
      <GridLines x0={7} y0={4} color="#33343a" />
    </svg>
  )
}

function ViewPane({ title, buttons, children }) {
  return (
    <section className="flex h-full min-w-0 flex-col">
      <DockHeader title={title} buttons={buttons} />
      <div className="min-h-0 flex-1 overflow-hidden">{children}</div>
    </section>
  )
}

function Views() {
  return (
    <div className="grid min-w-0 flex-1 grid-cols-[505fr_260fr] grid-rows-[271fr_275fr] gap-x-px gap-y-[2px]">
      <ViewPane title="XY view" buttons><XYCanvas /></ViewPane>
      <ViewPane title="Perspective view" buttons={false}><PerspectiveCanvas /></ViewPane>
      <ViewPane title="" buttons={false}><SideCanvas /></ViewPane>
      <ViewPane title="" buttons={false}><YZCanvas /></ViewPane>
    </div>
  )
}

function ScriptPrompt() {
  return (
    <section className="flex min-h-0 flex-1 gap-[3px] overflow-hidden pl-px pt-[5px]">
      <div className="relative flex w-[22px] shrink-0 items-start justify-center border border-[#c0c0c0] bg-[#dadada] pt-[17px]">
        <h2 className="rotate-180 whitespace-nowrap leading-5 [writing-mode:vertical-rl]">Script Prompt</h2>
        <button type="button" aria-label="Close Script Prompt" className="absolute left-[5px] top-[7px]"><CloseIcon /></button>
        <button type="button" aria-label="Float Script Prompt" className="absolute left-[7px] top-[32px]"><FloatIcon /></button>
      </div>
      <label className="flex flex-1 border border-[#a3a8ad] bg-white pl-1 pt-[3px]">
        <span>&gt;</span>
        <textarea aria-label="Script prompt" className="flex-1 resize-none bg-white outline-none" />
      </label>
    </section>
  )
}

/* ---------- visualizer ---------- */

// spectrum samples in plot pixels
const SPECTRUM = [
  [30, 29.5], [46, 30], [58, 29], [68, 27], [79, 23.5], [94, 20.5], [108, 23], [126, 32], [142, 36.5],
  [156, 33], [174, 22], [183, 19.5], [193, 23], [203, 35], [213, 57], [222, 90], [234, 135], [246, 181],
  [259, 225], [270, 250], [278, 259.5], [285, 262.5], [293, 260], [303, 246], [316, 209], [325, 178],
  [336, 133], [347, 90], [357, 58], [367, 34.5], [377, 22], [388, 17.5], [402, 22], [416, 29.5],
  [431, 32.5], [447, 28], [465, 20], [483, 17], [497, 18.5], [509, 22],
]

function smoothPath(pts) {
  let d = `M${pts[0][0]} ${pts[0][1]}`
  for (let i = 0; i < pts.length - 1; i++) {
    const p0 = pts[i - 1] || pts[i]
    const p1 = pts[i]
    const p2 = pts[i + 1]
    const p3 = pts[i + 2] || p2
    const h = (p2[0] - p1[0]) / 3
    const m1 = (p2[1] - p0[1]) / (p2[0] - p0[0])
    const m2 = (p3[1] - p1[1]) / (p3[0] - p1[0])
    d += `C${p1[0] + h} ${p1[1] + m1 * h} ${p2[0] - h} ${p2[1] - m2 * h} ${p2[0]} ${p2[1]}`
  }
  return d
}

const Y_TICKS = ['1', '0.95', '0.9', '0.85', '0.8', '0.75', '0.7', '0.65']
const X_TICKS = [
  '1.5e-06', '1.51e-06', '1.52e-06', '1.53e-06', '1.54e-06', '1.55e-06',
  '1.56e-06', '1.57e-06', '1.58e-06', '1.59e-06', '1.6e-06',
]

function Plot() {
  return (
    <svg className="block w-full overflow-visible bg-white" viewBox="0 0 525 318" role="img" aria-label="Transmission against wavelength">
      <g stroke="#c4c4c4" shapeRendering="crispEdges">
        {range(9).map((i) => {
          const x = Math.round(30 + (i + 1) * 47.9) + 0.5
          return <path key={i} d={`M${x} 16V284`} />
        })}
        {range(6).map((i) => {
          const y = Math.round(15.5 + (i + 1) * 38.4) + 0.5
          return <path key={i} d={`M30 ${y}H509`} />
        })}
      </g>
      <g stroke="#333" shapeRendering="crispEdges">
        <path d="M30.500 15V288M27 284.500H509.500" />
        {Y_TICKS.map((t, i) => {
          const y = Math.round(15 + i * 38.4) + 0.5
          return <path key={t} d={`M27 ${y}h4`} />
        })}
        {X_TICKS.map((t, i) => {
          const x = Math.round(30 + i * 47.9) + 0.5
          return <path key={t} d={`M${x} 284v4`} />
        })}
      </g>
      <path d={smoothPath(SPECTRUM)} fill="none" stroke="#4343b4" />
      <g fill="#222" fontFamily="Lato, sans-serif" fontSize="10">
        {Y_TICKS.map((t, i) => (
          <text key={t} x="25" y={18 + Math.round(i * 38.4)} textAnchor="end">{t}</text>
        ))}
        {X_TICKS.map((t, i) => (
          <text key={t} x={30 + Math.round(i * 47.9)} y="297" textAnchor="middle">{t}</text>
        ))}
        <text x="270" y="311" fontSize="14" textAnchor="middle">lambda(m)</text>
      </g>
    </svg>
  )
}

function VizButton({ label, active, menu, children }) {
  return (
    <div className={`flex h-[23px] border ${active ? 'border-[#3f7fb5] bg-[#cfe5f8]' : 'border-[#b9b9b9] bg-[#e3e3e3]'}`}>
      <button type="button" aria-label={label} className="flex w-[21px] items-center justify-center">
        {children}
      </button>
      {menu && (
        <button type="button" aria-label={`${label} options`} className="flex w-[15px] items-center justify-center border-l border-[#b9b9b9] text-black">
          <Caret />
        </button>
      )}
    </div>
  )
}

function VizToolbar() {
  return (
    <div className="flex gap-2 pl-[11px]">
      <VizButton label="Zoom" active><Magnifier size={19} /></VizButton>
      <VizButton label="Pan"><Hand size={18} /></VizButton>
      <VizButton label="Select"><Pointer size={17} /></VizButton>
      <VizButton label="Zoom extent"><Magnifier size={19} target /></VizButton>
      <VizButton label="Export image" menu>
        <svg width="20" height="19" viewBox="0 0 20 19">
          <text x="10" y="11" textAnchor="middle" fontSize="9" fontWeight="700" fontFamily="Open Sans, sans-serif" fill="#1f4a63">PNG</text>
          <path d="M3 13l7 3.500 7-3.500" fill="none" stroke="#1f4a63" strokeWidth="1.800" />
        </svg>
      </VizButton>
      <VizButton label="Export text" menu>
        <svg width="19" height="19" viewBox="0 0 19 19">
          <text x="9.500" y="12" textAnchor="middle" fontSize="16" fontWeight="700" fontFamily="Liberation Serif, serif" fill="#111">T</text>
          <path d="M3.500 13.500l6 3 6-3" fill="none" stroke="#e7a02c" strokeWidth="1.800" />
        </svg>
      </VizButton>
      <VizButton label="Export to Matlab" menu>
        <svg width="19" height="19" viewBox="0 0 19 19">
          <path d="M1 4h3V2l5 3.500-5 3V7H1z" fill="#35c04a" stroke="#229a35" strokeWidth=".6" />
          <text x="8" y="17" fontSize="11" fontFamily="Liberation Serif, serif" fill="#333">M</text>
        </svg>
      </VizButton>
      <VizButton label="Edit"><Pencil size={17} /></VizButton>
    </div>
  )
}

const PLOT_TYPES = [
  { id: 'line', label: 'Line', option: 'xy plot' },
  { id: 'image', label: 'Image', option: 'xy plot', disabled: true },
  { id: 'surface', label: 'Surface', option: 'xyz plot', disabled: true },
  { id: 'vector', label: 'Vector', disabled: true },
]

function PlotTypes() {
  return (
    <fieldset className="border border-[#dcdcdc] px-[10px] pb-[3px]">
      <legend className="-ml-[6px] px-[2px] leading-4">Plot types</legend>
      <div className="pt-[6px]">
        {PLOT_TYPES.map((t) => (
          <div key={t.id} className={`flex h-[27px] items-center ${t.disabled ? 'text-[#848484]' : 'text-black'}`}>
            <label className="flex w-[75px] shrink-0 items-center gap-[6px]">
              <input
                type="radio"
                name="plot-type"
                defaultChecked={t.id === 'line'}
                disabled={t.disabled}
                className="h-4 w-4 appearance-none rounded-full border border-[#333] bg-white checked:bg-[#222] checked:shadow-[inset_0_0_0_3px_white] disabled:border-[#ccc]"
              />
              {t.label}
            </label>
            {t.option && (
              <span className="relative flex min-w-0 flex-1">
                <select
                  aria-label={`${t.label} plot`}
                  disabled={t.disabled}
                  className={`h-5 w-full appearance-none border pl-[2px] leading-4 ${t.disabled ? 'border-[#bfbfbf] bg-[#cccccc]' : 'border-[#a9a9a9] bg-[#e2e2e2]'}`}
                >
                  <option>{t.option}</option>
                </select>
                <span className="pointer-events-none absolute right-[5px] top-[5px]">
                  <Chevron d={DOWN} width={1.2} color={t.disabled ? '#a5a5a5' : '#444'} />
                </span>
              </span>
            )}
          </div>
        ))}
      </div>
    </fieldset>
  )
}

function Check({ label, checked, disabled, onChange }) {
  return (
    <label className={`flex items-center gap-[6px] ${disabled ? 'text-[#848484]' : 'text-black'}`}>
      <span className="relative flex">
        <input
          type="checkbox"
          checked={checked}
          disabled={disabled}
          onChange={(e) => onChange?.(e.target.checked)}
          className="h-4 w-4 appearance-none border border-[#333] bg-white disabled:border-[#c6c6c6]"
        />
        {checked && (
          <svg className="pointer-events-none absolute left-0 top-0" width="16" height="16" viewBox="0 0 16 16">
            <path d="M3 8l3.500 3.500L13 4.500" fill="none" stroke={disabled ? '#bdbdbd' : '#222'} strokeWidth="1.500" />
          </svg>
        )}
      </span>
      {label}
    </label>
  )
}

function PlaneButton({ label }) {
  return (
    <button type="button" aria-label={`${label} plane`} disabled className="flex h-[26px] w-[29px] items-center justify-center bg-[#cccccc]">
      <svg width="20" height="19" viewBox="0 0 20 19">
        <path d="M0 3l3-3h14l3 3v13l-3 3H3l-3-3z" fill="#8a8a8a" />
        {label === 'Lock' ? (
          <path
            d="M5 3.500h7.500a3 3 0 013 3V15.500H6.500a2.500 2.500 0 01-2.500-2.500V11a2.500 2.500 0 012.500-2.500h9M9 12h3"
            fill="none"
            stroke="#fff"
            strokeWidth="2"
          />
        ) : (
          <text x="10" y="14" textAnchor="middle" fontSize="13" fontWeight="700" fontFamily="Noto Sans, sans-serif" fill="#fff">
            {label}
          </text>
        )}
      </svg>
    </button>
  )
}

function PlotSettings() {
  const [hold, setHold] = useState(false)
  const [lock, setLock] = useState(false)
  const [auto, setAuto] = useState(true)

  return (
    <fieldset className="mt-2 border border-[#dcdcdc] px-[10px] pb-[9px]">
      <legend className="-ml-[6px] px-[2px] leading-4">Plot settings</legend>
      <div className="flex gap-[9px] pt-[11px]">
        <PlaneButton label="XY" />
        <PlaneButton label="XZ" />
        <PlaneButton label="YZ" />
        <PlaneButton label="Lock" />
      </div>
      <div className="mt-[9px] flex flex-col gap-[9px]">
        <Check label="Show axes" checked disabled />
        <Check label="Hold Camera" checked={hold} onChange={setHold} />
        <Check label="Lock Color Bar" checked={lock} onChange={setLock} />
      </div>
      <div className="mt-[9px] flex items-center gap-2">
        <button type="button" className="h-[25px] w-[87px] border border-[#adadad] bg-[#e1e1e1]">Redraw</button>
        <Check label="Auto" checked={auto} onChange={setAuto} />
      </div>
      <button type="button" className="mt-[9px] block h-[25px] w-full border border-[#adadad] bg-[#e1e1e1]">
        Plot in New Window
      </button>
    </fieldset>
  )
}

function Visualizer() {
  return (
    <section className="absolute bottom-0 left-[241px] right-[2px] top-[270px] flex flex-col overflow-hidden border-l border-t border-[#8a5a55] bg-[#f0f0f0] text-xs shadow-[0_0_8px_rgba(0,0,0,0.4)]">
      <header className="flex h-[34px] shrink-0 items-center bg-white pl-2">
        <svg width="19" height="19" viewBox="0 0 19 19">
          <rect width="19" height="19" fill="#0e3a54" />
          <rect x="4" y="4" width="11" height="11" fill="#14506e" stroke="#fff" strokeWidth="2" />
        </svg>
        <h1 className="flex-1 pl-1 text-[13px]">Visualizer 1</h1>
        <div className="flex items-center gap-[42px] pr-[21px]">
          <button type="button" aria-label="Minimize">
            <svg width="13" height="13" viewBox="0 0 13 13"><path d="M1 6.500h12" stroke="#222" /></svg>
          </button>
          <button type="button" aria-label="Maximize">
            <svg width="13" height="13" viewBox="0 0 13 13"><rect x=".5" y=".5" width="11" height="11" fill="none" stroke="#222" /></svg>
          </button>
          <button type="button" aria-label="Close">
            <svg width="13" height="13" viewBox="0 0 13 13"><path d="M1 1l11 11M12 1L1 12" stroke="#222" /></svg>
          </button>
        </div>
      </header>
      <div className="flex gap-2 pl-3 pr-[13px] pt-[12px]">
        <div className="flex min-w-0 flex-1 flex-col gap-[11px] pt-[11px]">
          <VizToolbar />
          <Plot />
        </div>
        <div className="w-[202px] shrink-0">
          <PlotTypes />
          <PlotSettings />
        </div>
      </div>
      <button type="button" className="ml-3 mr-[13px] mt-[7px] flex h-[27px] shrink-0 items-center justify-center gap-[7px] bg-[#e2e2e2]">
        <svg width="12" height="8" viewBox="0 0 12 8"><path d="M0 0h12L6 8z" /></svg>
        Attributes
      </button>
    </section>
  )
}

export default function App() {
  return (
    <div className="flex h-screen bg-black px-[138px] font-['Noto_Sans','Open_Sans',sans-serif] text-[13px] leading-4 text-[#1a1a1a]">
      <div className="relative flex min-w-0 flex-1 flex-col overflow-hidden bg-[#f0f0f0]">
        <nav className="flex h-5 shrink-0 items-center gap-[13px] bg-white pl-[5px] text-[#9a9a9a]">
          {MENUS.map((m) => (
            <button key={m} type="button">{m}</button>
          ))}
        </nav>
        <MainToolbar />
        <div className="flex min-h-0 flex-1">
          <LeftStrip />
          <div className="flex min-w-0 flex-1 flex-col pl-[2px] pt-px">
            <div className="flex h-[549px] shrink-0 gap-[6px]">
              <div className="w-[197px] shrink-0">
                <ObjectsTree />
                <ResultView />
              </div>
              <Views />
            </div>
            <ScriptPrompt />
          </div>
        </div>
        <Visualizer />
      </div>
    </div>
  )
}
